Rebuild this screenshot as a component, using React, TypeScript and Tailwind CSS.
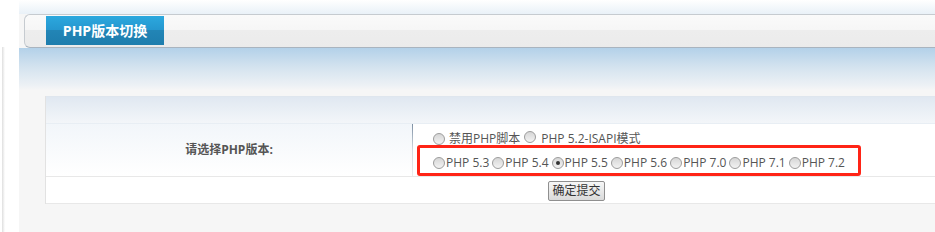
import React from 'react';

const Radio: React.FC<{ checked?: boolean }> = ({ checked }) => (
  <span className="relative inline-block w-[12px] h-[12px] shrink-0 rounded-full border border-[#9c9c9c] bg-linear-to-b from-[#d6d6d6] to-[#f3f3f3]">
    {checked && <span className="absolute inset-[3px] rounded-full bg-[#333]" />}
  </span>
);

const versions = ['PHP 5.3', 'PHP 5.4', 'PHP 5.5', 'PHP 5.6', 'PHP 7.0', 'PHP 7.1', 'PHP 7.2'];

export default function App() {
  return (
    <div className="w-[935px] h-[232px] flex overflow-hidden text-[12px] text-[#555] font-['Open_Sans','Noto_Sans_CJK_SC',sans-serif]">
      {/* left strip */}
      <div className="w-[19px] shrink-0 bg-white flex">
        <div className="mt-[47px] ml-[2px] w-[3px] bg-linear-to-r from-[#dedede] to-white" />
      </div>

      {/* main */}
      <div className="flex-1 min-w-0 bg-[#f6f6f6] flex flex-col">
        <div className="h-[14px] bg-linear-to-b from-white to-[#e9f1f8]" />

        {/* title bar */}
        <div className="h-[34px] ml-[5px] rounded-l-[6px] border-y border-l border-[#c6cbd0] border-b-[#a9b4bf] bg-[linear-gradient(#fafafa_0%,#f6f6f6_46%,#ededed_48%,#ebebeb_100%)]">
          <div className="ml-[21px] mt-[1px] h-[29px] w-[118px] flex items-center justify-center text-white font-bold text-[14px] bg-[linear-gradient(#2ca8de_0%,#2597cf_48%,#2285b6_50%,#1e7dad_100%)]">
            PHP版本切换
          </div>
        </div>

        <div className="h-[48px] bg-[linear-gradient(#b3d1e9_0%,#d4e3ef_40%,#edf1f5_78%,#f6f6f6_88%)]" />

        {/* form table */}
        <div className="ml-[26px] border-l border-[#e2e2e2] bg-white">
          <div className="h-[27px] border-t border-[#dfe6ee] bg-linear-to-b from-[#e0e8f1] to-[#f3f6f9]" />

          <div className="h-[53px] border-t border-[#e8eef4] flex">
            <div className="w-[366px] flex items-center justify-center font-bold text-[#555] bg-linear-to-b from-[#f2f6fa] to-white">
              请选择PHP版本:
            </div>
            <div className="w-px bg-linear-to-b from-[#7e90a3] via-[#d4dbe2] to-[#ececec]" />
            <div className="relative flex-1 pl-[20px] pt-[1px] flex flex-col">
              <div className="h-[25px] pt-[2px] flex items-center">
                <Radio />
                <span className="ml-[4px]">禁用PHP脚本</span>
                <span className="ml-[4px]"><Radio /></span>
                <span className="ml-[5px]">PHP 5.2-ISAPI模式</span>
              </div>
              <div className="h-[25px] pt-[1px] flex items-center gap-[3px]">
                {versions.map((v) => (
                  <span key={v} className="flex items-center">
                    <Radio checked={v === 'PHP 5.5'} />
                    <span className="ml-[1px]">{v}</span>
                  </span>
                ))}
              </div>
              <div className="absolute left-[4px] top-[21px] w-[444px] h-[31px] border-[3px] border-[#ff2416] rounded-[3px]" />
            </div>
          </div>

          <div className="h-[28px] border-y border-[#e8e8e8] flex items-center pl-[502px]">
            <button className="w-[57px] h-[20px] mt-[1px] flex items-center justify-center border border-[#8f8f8f] rounded-[2px] bg-linear-to-b from-[#f7f7f7] to-[#dadada] text-[#333] text-[12px]">
              确定提交
            </button>
          </div>
        </div>
      </div>
    </div>
  );
}
